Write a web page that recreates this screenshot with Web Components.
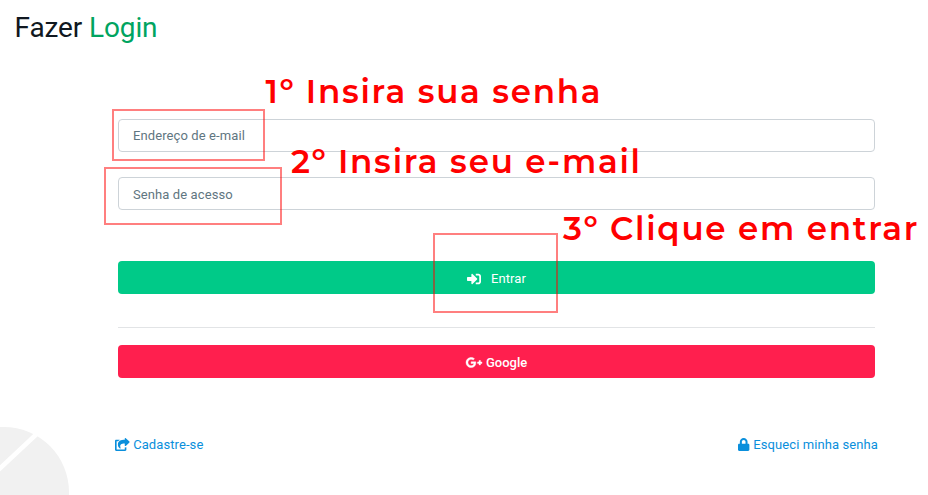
<!DOCTYPE html>
<html lang="pt-BR">
<head>
<meta charset="utf-8">
<title>Fazer Login</title>
<style>
body{margin:0;background:#fff;font-family:Roboto,"Liberation Sans",sans-serif;font-size:13px;color:#0b1a26}
</style>
</head>
<body>
<login-page></login-page>
<script>
const define=(name,html)=>customElements.define(name,class extends HTMLElement{
  constructor(){super();this.attachShadow({mode:"open"}).innerHTML=html;}
});

define("page-title",`<style>:host{display:block;font-size:28px;line-height:34px;padding:11px 14px 0 14.500px;height:33px;letter-spacing:-.12px;color:#101820}
::slotted(span){color:#00a460}</style><slot></slot>`);

define("text-field",`<style>:host{display:flex;align-items:center;box-sizing:border-box;height:33px;padding:var(--nudge,0) 14px 0;border:1px solid #cdd3d8;border-radius:4px;background:#fff;color:#5f7681;line-height:20px;letter-spacing:.1px}</style><slot></slot>`);

define("action-button",`<style>:host{display:flex;align-items:center;justify-content:center;box-sizing:border-box;height:33px;padding-top:2px;border-radius:4px;color:#fff;font-weight:500;line-height:20px;background:var(--fill);gap:var(--gap,4px)}</style><slot name="icon"></slot><span><slot></slot></span>`);

define("icon-link",`<style>:host{display:flex;align-items:center;gap:3.500px;color:#0a8fdc;line-height:20px;letter-spacing:.09px}</style><slot name="icon"></slot><span><slot></slot></span>`);

define("rule-line",`<style>:host{display:block;height:1px;background:#e2e4e6}</style>`);

const icons={
 enter:["0 0 512 512","M416 448h-84c-6.600 0-12-5.400-12-12v-40c0-6.600 5.400-12 12-12h84c17.700 0 32-14.300 32-32V160c0-17.700-14.300-32-32-32h-84c-6.600 0-12-5.400-12-12V76c0-6.600 5.400-12 12-12h84c53 0 96 43 96 96v192c0 53-43 96-96 96zm-47-209L201 71c-15-15-41-4.500-41 17v96H24c-13.300 0-24 10.700-24 24v96c0 13.300 10.700 24 24 24h136v96c0 21.500 26 32 41 17l168-168c9.300-9.400 9.300-24.600 0-34z"],
 gplus:["0 0 640 512","M386 228c2 11 3 22 3 37 0 113-76 191-188 191C91 456 0 366 0 256S91 56 201 56c54 0 99 20 133 52l-54 52c-15-14-41-31-79-31-67 0-123 56-123 127s56 127 123 127c79 0 108-57 113-86H201v-69zM571 235h58v58h-58v58h-58v-58h-58v-58h58v-58h58z"],
 share:["0 0 576 512","M568 177 424 313c-15 14-40 4-40-18v-78c-144 1-206 36-163 176 5 16-13 27-26 18-43-31-82-90-82-150 0-144 117-188 271-189V24c0-22 25-32 40-18l144 136c11 10 11 25 0 35zM384 379v69H64V128h51c16-17 36-31 60-43 17-9 11-21-4-21H48C21 64 0 85 0 112v352c0 27 21 48 48 48h352c27 0 48-21 48-48v-88c0-9-7-13-15-10-14 5-27 6-39 4-6-1-10 3-10 9z"],
 lock:["0 0 448 512","M400 224h-24v-72C376 68 308 0 224 0S72 68 72 152v72H48c-27 0-48 21-48 48v192c0 27 21 48 48 48h352c27 0 48-21 48-48V272c0-27-21-48-48-48zm-104 0H152v-72c0-40 32-72 72-72s72 32 72 72z"]
};
customElements.define("glyph-icon",class extends HTMLElement{
  constructor(){super();this.attachShadow({mode:"open"});}
  connectedCallback(){
    const [box,d]=icons[this.getAttribute("name")];
    this.shadowRoot.innerHTML=`<style>:host{display:block;flex:none;height:13px}svg{display:block;height:100%;fill:currentColor;stroke:currentColor;stroke-width:var(--weight,0);overflow:visible}</style><svg viewBox="${box}"><path d="${d}"/></svg>`;
  }
});

define("corner-art",`<style>:host{position:absolute;left:0;bottom:0;width:80px;height:80px}svg{display:block}</style>
<svg width="80" height="80" viewBox="0 415 80 80"><circle cx="4" cy="492" r="65" fill="#f1f1f1"/><path d="M-6 474 42 429" stroke="#fff" stroke-width="4.500"/></svg>`);

define("tutorial-notes",`<style>:host{position:absolute;inset:0;pointer-events:none}svg{display:block}
text{font:600 32.500px Montserrat,Inter,"Open Sans",sans-serif;fill:#f00}
rect{fill:none;stroke:#f00;stroke-opacity:.5;stroke-width:2}</style>
<svg width="928" height="495" viewBox="0 0 928 495">
<rect x="113" y="110" width="151" height="50"/><rect x="105" y="168" width="176" height="56"/><rect x="434" y="234" width="123" height="78"/>
<text x="265.500" y="103" textLength="335">1º Insira sua senha</text>
<text x="291" y="172.500" textLength="349">2º Insira seu e-mail</text>
<text x="563" y="239.500" textLength="354.500">3º Clique em entrar</text>
</svg>`);

define("login-page",`<style>
:host{display:block;position:relative;width:928px;height:495px;overflow:hidden}
form{display:grid;margin:75px 53px 0 118px}
.second{margin-top:25px;--nudge:2px}.enter{margin-top:51px;--fill:#00ca88;--gap:10px;font-weight:400;letter-spacing:.1px}
rule-line{margin-top:33px}.google{margin-top:17px;--fill:#ff1f4e;--weight:16px}
.enter glyph-icon{height:14px}
footer{display:flex;justify-content:space-between;margin:57px 50px 0 115px}
footer glyph-icon{margin-top:-2px}
</style>
<corner-art></corner-art>
<page-title>Fazer <span>Login</span></page-title>
<form>
<text-field>Endereço de e-mail</text-field>
<text-field class="second">Senha de acesso</text-field>
<action-button class="enter"><glyph-icon slot="icon" name="enter"></glyph-icon>Entrar</action-button>
<rule-line></rule-line>
<action-button class="google"><glyph-icon slot="icon" name="gplus"></glyph-icon>Google</action-button>
</form>
<footer>
<icon-link><glyph-icon slot="icon" name="share"></glyph-icon>Cadastre-se</icon-link>
<icon-link><glyph-icon slot="icon" name="lock"></glyph-icon>Esqueci minha senha</icon-link>
</footer>
<tutorial-notes></tutorial-notes>`);
</script>
</body>
</html>
